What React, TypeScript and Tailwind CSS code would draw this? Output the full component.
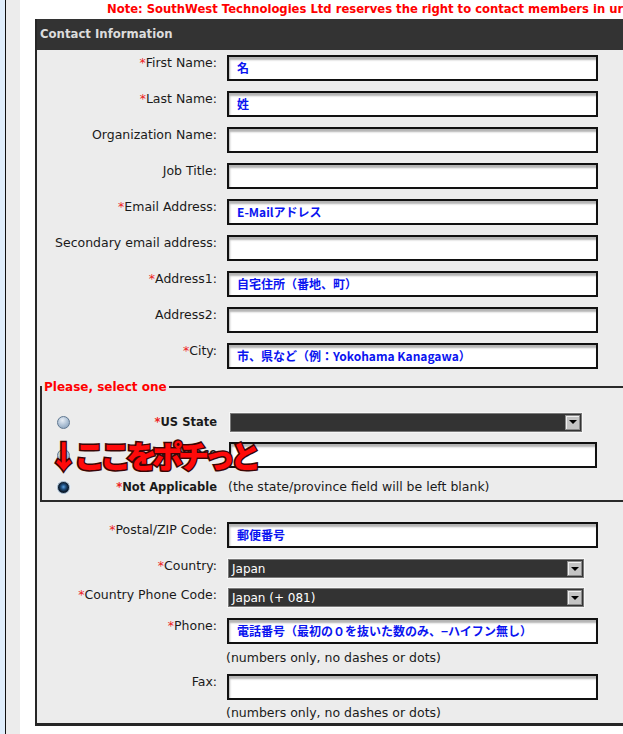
const sans = "font-['DejaVu_Sans',Verdana,sans-serif]";
const jp = "font-['Noto_Sans_CJK_JP','DejaVu_Sans',sans-serif]";

interface FieldRow {
    label: string;
    required: boolean;
    value?: string;
}

const topRows: FieldRow[] = [
    { label: 'First Name:', required: true, value: '名' },
    { label: 'Last Name:', required: true, value: '姓' },
    { label: 'Organization Name:', required: false },
    { label: 'Job Title:', required: false },
    { label: 'Email Address:', required: true, value: 'E-Mailアドレス' },
    { label: 'Secondary email address:', required: false },
    { label: 'Address1:', required: true, value: '自宅住所（番地、町）' },
    { label: 'Address2:', required: false },
    { label: 'City:', required: true, value: '市、県など（例：Yokohama Kanagawa）' },
];

function Label({ label, required }: { label: string; required: boolean }) {
    return (
        <div className="w-[180px] shrink-0 pt-px text-right leading-[14px]">
            {required && <span className="text-[#ee2222]">*</span>}
            {label}
        </div>
    );
}

function TextBox({ value, width = 'w-[371px]' }: { value?: string; width?: string }) {
    return (
        <div
            className={`${width} h-[26px] border-2 border-[#111] bg-white shadow-[inset_1px_3px_2px_#b4b4b4] px-[8px] flex items-center ${jp} text-[12px] font-bold text-[#0a14f0] whitespace-nowrap`}
        >
            {value}
        </div>
    );
}

function DropDown({ value, width }: { value?: string; width: string }) {
    return (
        <div className={`${width} h-[21px] border border-[#f6f6f6]`}>
            <div className="h-full border border-[#7a7a7a] bg-[#333] flex items-center">
                <span className="pl-[3px] text-[12px] text-white leading-none">{value}</span>
                <div className="ml-auto mr-px h-[15px] w-[15px] border border-[#8a8a8a] bg-[#c4c4c4] shadow-[inset_1px_1px_0_#f0f0f0] flex items-center justify-center">
                    <div className="w-0 h-0 border-l-[4px] border-r-[4px] border-t-[4px] border-l-transparent border-r-transparent border-t-black" />
                </div>
            </div>
        </div>
    );
}

function Radio({ checked }: { checked?: boolean }) {
    if (checked) {
        return (
            <div className="w-[13px] h-[13px] rounded-full border border-[#9bb0c4] bg-[radial-gradient(circle_at_50%_45%,#5aa0e0_0,#1f4f80_30%,#0c1a2a_60%,#1d3550_100%)] shadow-[0_0_0_1px_#e8eef4]" />
        );
    }
    return (
        <div className="w-[13px] h-[13px] rounded-full border border-[#5f7790] bg-[radial-gradient(circle_at_40%_30%,#e8eef6_0,#a9bdd2_55%,#7f97b2_100%)]" />
    );
}

export default function App() {
    return (
        <div className={`flex w-[623px] min-h-[734px] overflow-hidden bg-white ${sans} text-[12.5px] text-[#1a1a1a]`}>
            <div className="w-[5px] shrink-0 bg-[#e0eefc]" />
            <div className="w-px shrink-0 bg-[#111]" />
            <div className="w-[14px] shrink-0 bg-[#ececec]" />
            <div className="w-[15px] shrink-0 bg-white" />

            <div className="w-[620px] shrink-0">
                <div className="h-[19px] pl-[72px] leading-[19px] whitespace-nowrap text-[11.6px] font-bold text-[#ff0000]">
                    Note: SouthWest Technologies Ltd reserves the right to contact members in urgent situations
                </div>

                <div className="border-l-2 border-b-[3px] border-[#262626] bg-[#ececec]">
                    <div className="h-[31px] bg-[#333] pl-[3px] flex items-center text-[11.7px] font-bold text-[#dcdcdc]">
                        Contact Information
                    </div>

                    <div className="pt-[5px] flex flex-col gap-[10px]">
                        {topRows.map((row) => (
                            <div key={row.label} className="flex items-start">
                                <Label label={row.label} required={row.required} />
                                <div className="ml-[10px]">
                                    <TextBox value={row.value} />
                                </div>
                            </div>
                        ))}
                    </div>

                    <fieldset className="mt-[11px] ml-[3px] border-2 border-[#2a2a2a] pt-[18px] pb-[6px]">
                        <legend className="px-[2px] ml-0 leading-[14px] text-[12px] font-bold text-[#ff0000]">
                            Please, select one
                        </legend>

                        <div className="flex items-center h-[20px]">
                            <div className="w-[175px] flex items-center">
                                <div className="ml-[15px]">
                                    <Radio />
                                </div>
                                <div className="flex-1 text-right text-[11.5px] font-bold leading-[14px]">
                                    <span className="text-[#ee2222]">*</span>US State
                                </div>
                            </div>
                            <div className="ml-[12px]">
                                <DropDown width="w-[354px]" />
                            </div>
                        </div>

                        <div className="relative mt-[10px] flex items-center h-[26px]">
                            <div className="w-[175px] flex items-center">
                                <div className="ml-[15px]">
                                    <Radio />
                                </div>
                                <div className="flex-1 text-right text-[11.5px] font-bold leading-[14px] -mt-[4px]">
                                    <span className="text-[#ee2222]">*</span>Province
                                </div>
                            </div>
                            <div className="ml-[12px]">
                                <TextBox width="w-[368px]" />
                            </div>
                            <div
                                className={`absolute left-[6px] top-[-3px] ${jp} text-[31px] font-black leading-none tracking-[-5px] whitespace-nowrap text-[#ff0a0a] [-webkit-text-stroke:3px_#3a0505] [paint-order:stroke_fill]`}
                            >
                                ↓ここをポチっと
                            </div>
                        </div>

                        <div className="mt-[12px] flex items-center h-[14px]">
                            <div className="w-[175px] flex items-center">
                                <div className="ml-[15px]">
                                    <Radio checked />
                                </div>
                                <div className="flex-1 text-right text-[11.5px] font-bold leading-[14px]">
                                    <span className="text-[#ee2222]">*</span>Not Applicable
                                </div>
                            </div>
                            <div className="ml-[11px] leading-[14px] whitespace-nowrap">
                                (the state/province field will be left blank)
                            </div>
                        </div>
                    </fieldset>

                    <div className="mt-[20px] flex items-start">
                        <Label label="Postal/ZIP Code:" required />
                        <div className="ml-[10px]">
                            <TextBox value="郵便番号" />
                        </div>
                    </div>

                    <div className="mt-[10px] flex items-start">
                        <Label label="Country:" required />
                        <div className="ml-[10px]">
                            <DropDown value="Japan" width="w-[358px]" />
                        </div>
                    </div>

                    <div className="mt-[8px] flex items-start">
                        <Label label="Country Phone Code:" required />
                        <div className="ml-[10px]">
                            <DropDown value="Japan (+ 081)" width="w-[358px]" />
                        </div>
                    </div>

                    <div className="mt-[10px] flex items-start">
                        <Label label="Phone:" required />
                        <div className="ml-[10px]">
                            <TextBox value="電話番号（最初の０を抜いた数のみ、−ハイフン無し）" />
                            <div className="mt-[7px] leading-[14px] -ml-px">(numbers only, no dashes or dots)</div>
                        </div>
                    </div>

                    <div className="mt-[9px] flex items-start pb-[3px]">
                        <Label label="Fax:" required={false} />
                        <div className="ml-[10px]">
                            <TextBox />
                            <div className="mt-[6px] leading-[14px] -ml-px">(numbers only, no dashes or dots)</div>
                        </div>
                    </div>
                </div>
            </div>
        </div>
    );
}
